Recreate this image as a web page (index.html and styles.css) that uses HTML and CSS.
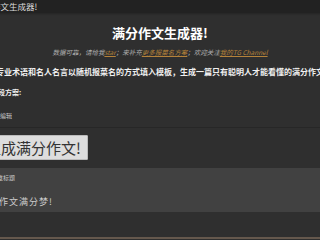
FILE: index.html
```html
<!DOCTYPE html>
<html lang="zh-CN">
<head>
<meta charset="utf-8">
<title>满分作文生成器</title>
<link rel="stylesheet" href="styles.css">
</head>
<body>
<div class="page">
  <div class="container">
    <header class="topbar"><span class="brand">满分作文生成器!</span></header>
    <h1 class="title">满分作文生成器!</h1>
    <p class="subtitle">数据可靠，请给我<a href="#">star</a>；来补充<a href="#">更多报菜名方案</a>；欢迎关注<a href="#">我的TG Channel</a></p>
    <p class="intro">将专业术语和名人名言以随机报菜名的方式填入模板，生成一篇只有聪明人才能看懂的满分作文。</p>
    <div class="label">分段方案:</div>
    <div class="hint">点此编辑</div>
    <hr class="divider">
    <button class="generate">生成满分作文!</button>
    <div class="panel">
      <div class="panel-label">文章标题</div>
      <div class="panel-text">我的作文满分梦!</div>
    </div>
    <div class="footer-line"></div>
  </div>
</div>
</body>
</html>
```
FILE: styles.css
```css
html, body {
  margin: 0;
  padding: 0;
  background: #2f2f2f;
  height: 100%;
}
body {
  font-family: "Noto Sans CJK SC", "Noto Sans", sans-serif;
  color: #eeeeee;
}
.page {
  display: flex;
  justify-content: center;
  overflow: hidden;
  height: 240px;
}
.container {
  flex: none;
  width: 370px;
  display: flex;
  flex-direction: column;
}
.topbar {
  height: 13px;
  background: #222222;
  display: flex;
  align-items: center;
  box-shadow: 0 1px 2px rgba(0,0,0,0.25);
}
.brand {
  font-size: 8.5px;
  line-height: 13px;
  color: #dddddd;
  white-space: nowrap;
}
.title {
  margin: 12px 0 0;
  font-size: 13px;
  line-height: 16px;
  font-weight: bold;
  text-align: center;
  color: #ffffff;
}
.subtitle {
  margin: 7px 0 0;
  font-size: 6.5px;
  line-height: 8px;
  font-style: italic;
  text-align: center;
  color: #b0b0b0;
  white-space: nowrap;
}
.subtitle a {
  color: #b5823a;
  text-decoration: underline;
}
.intro {
  margin: 11px 0 0 13px;
  font-size: 8px;
  line-height: 10px;
  font-weight: bold;
  color: #f0f0f0;
  white-space: nowrap;
}
.label {
  margin: 11px 0 0 16px;
  font-size: 7px;
  line-height: 9px;
  font-weight: bold;
  color: #eeeeee;
}
.hint {
  margin: 15px 0 0 13px;
  font-size: 6px;
  line-height: 8px;
  color: #cccccc;
}
.divider {
  margin: 7px 0 0;
  border: 0;
  height: 1px;
  background: #272727;
}
.generate {
  align-self: flex-start;
  margin: 7px 0 0 4px;
  height: 25px;
  padding: 0 6px;
  font-family: "Noto Sans CJK SC", sans-serif;
  font-size: 15px;
  line-height: 17px;
  color: #333333;
  background: #dddddd;
  border: 1px solid #bbbbbb;
  border-radius: 1px;
}
.panel {
  margin-top: 8px;
  height: 44px;
  box-sizing: border-box;
  padding: 6px 0 0 16px;
  background: #414141;
  display: flex;
  flex-direction: column;
}
.panel-label {
  font-size: 6px;
  line-height: 8px;
  color: #cccccc;
}
.panel-text {
  margin-top: 14px;
  margin-left: -12px;
  font-size: 9px;
  line-height: 11px;
  letter-spacing: 1px;
  color: #cccccc;
}
.footer-line {
  margin-top: 25px;
  height: 2px;
  background: #65584d;
}
```
